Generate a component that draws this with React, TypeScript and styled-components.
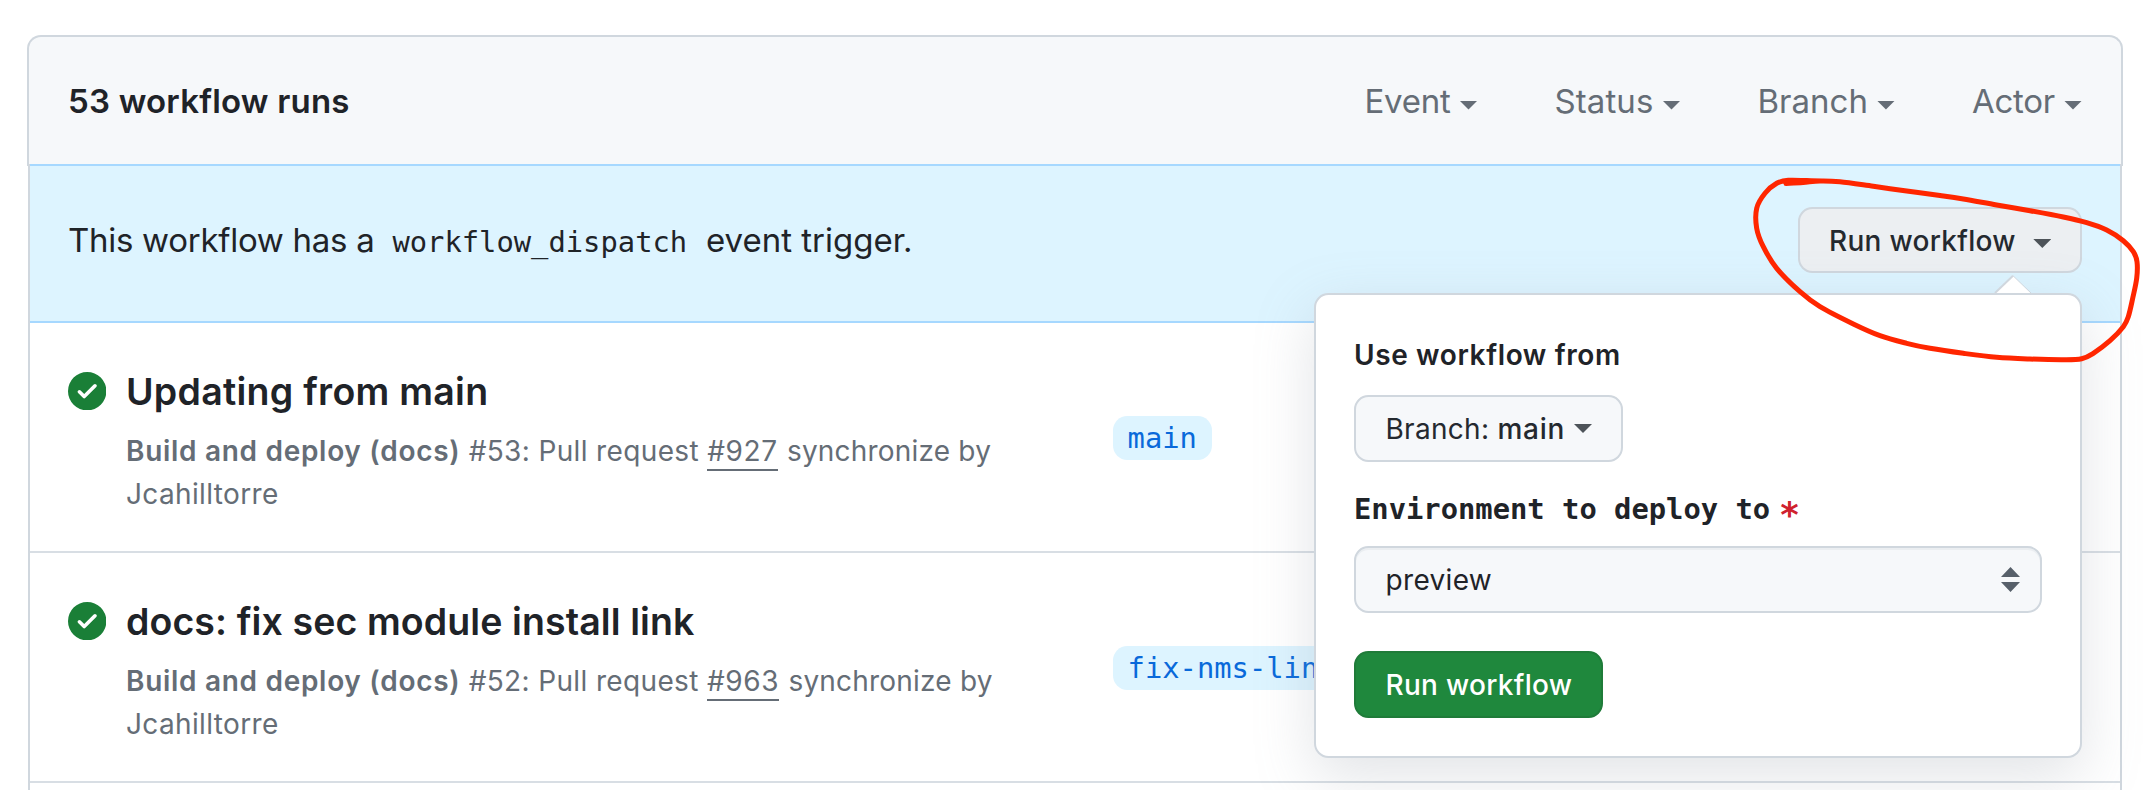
import React from "react";
import styled, { createGlobalStyle } from "styled-components";

const sans = `Inter, "Liberation Sans", sans-serif`;
const mono = `"DejaVu Sans Mono", "Liberation Mono", monospace`;

const GlobalStyle = createGlobalStyle`
  *, *::before, *::after { box-sizing: border-box; }
  body {
    margin: 0;
    background: #fff;
    color: #1f2328;
    font-family: ${sans};
    overflow: hidden;
  }
`;

const Page = styled.main`
  position: relative;
  width: 2144px;
  height: 790px;
  padding: 35px 21px 0 27px;
  overflow: hidden;
`;

const Header = styled.header`
  display: flex;
  align-items: center;
  justify-content: space-between;
  height: 131px;
  padding: 0 39px 2px 39px;
  background: #f6f8fa;
  border: 2px solid #d0d7de;
  border-bottom: 0;
  border-radius: 14px 14px 0 0;
`;

const RunCount = styled.h2`
  margin: 0;
  font-size: 33px;
  font-weight: 600;
  line-height: 50px;
  letter-spacing: 0.2px;
`;

const Filters = styled.nav`
  display: flex;
  gap: 77px;
`;

const Filter = styled.button<{ $tracking: number }>`
  display: flex;
  align-items: center;
  gap: 9px;
  padding: 0;
  border: 0;
  background: none;
  color: #656d76;
  font: 400 33px/50px ${sans};
  letter-spacing: ${(p) => p.$tracking}px;
`;

const Caret = styled.span<{ $drop?: number }>`
  flex: none;
  width: 18px;
  height: 9px;
  margin-top: ${(p) => p.$drop ?? 0}px;
  background: currentColor;
  clip-path: polygon(0 0, 100% 0, 50% 100%);
`;

const RunList = styled.section`
  height: 700px;
  margin: -2px 1px 0;
  border: solid #d0d7de;
  border-width: 0 2px;
`;

const Banner = styled.div`
  position: relative;
  display: flex;
  align-items: flex-start;
  justify-content: space-between;
  height: 159px;
  padding: 41px 38px 0;
  background: #ddf4ff;
  border: solid #a6d8ff;
  border-width: 2px 0;
`;

const BannerText = styled.p`
  margin: 0;
  font-size: 33px;
  line-height: 66px;
  letter-spacing: -0.28px;
`;

const BannerTail = styled.span`
  letter-spacing: 0;
`;

const Code = styled.code`
  padding: 0 9.5px 0 9px;
  font: 28.8px ${mono};
  letter-spacing: 0;
`;

const Button = styled.button<{ $variant?: "active" | "primary" }>`
  display: inline-flex;
  flex: none;
  align-items: center;
  height: 67px;
  padding: 0 28px 0 29.5px;
  border: 2px solid ${(p) => (p.$variant === "primary" ? "#1f7b39" : "#d0d7de")};
  border-radius: 14.4px;
  background: ${(p) =>
    p.$variant === "primary" ? "#1f883d" : p.$variant === "active" ? "#eceff2" : "#f6f8fa"};
  color: ${(p) => (p.$variant === "primary" ? "#fff" : "#24292f")};
  font: 500 28px/40px ${sans};
  letter-spacing: 0.3px;
  white-space: pre;
`;

const TriggerButton = styled(Button)`
  width: 284px;
  height: 66px;
  padding: 2px 28px 0 29px;
  gap: 17.5px;
`;

const BranchButton = styled(Button)`
  align-self: flex-start;
  width: 269px;
  margin-top: 18px;
`;

const SubmitButton = styled(Button)`
  align-self: flex-start;
  width: 249px;
  margin-top: 38px;
`;

const BranchPrefix = styled.span`
  font-weight: 400;
  letter-spacing: 0.3px;
`;

const BranchName = styled.span`
  margin-right: 9px;
  letter-spacing: 0.7px;
`;

const ButtonCaret = styled(Caret)`
  background: #4d5359;
`;

const Popover = styled.form`
  position: absolute;
  top: 127px;
  right: 38px;
  z-index: 2;
  display: flex;
  flex-direction: column;
  width: 768px;
  height: 465px;
  padding: 39px 38px 38px;
  background: #fff;
  border: 2px solid #d0d7de;
  border-radius: 14.4px;
  box-shadow: 0 19px 58px rgba(140, 149, 159, 0.25);
`;

const PopoverArrow = styled.svg`
  position: absolute;
  top: -20px;
  right: 48px;
  width: 38px;
  height: 18px;
`;

const FieldTitle = styled.span`
  font-size: 28px;
  font-weight: 600;
  line-height: 43px;
  letter-spacing: 0.62px;
`;

const InputLabel = styled.label`
  display: flex;
  align-items: flex-start;
  height: 36px;
  margin-top: 29px;
  font: 700 28.8px/37px ${mono};
`;

const Required = styled.span`
  margin: 6px 0 0 9px;
  color: #cf222e;
  font-size: 35px;
  font-weight: 700;
`;

const Select = styled.div`
  display: flex;
  flex: none;
  align-items: center;
  justify-content: space-between;
  height: 67px;
  margin-top: 19px;
  padding: 0 20px 0 29.5px;
  background: #f6f8fa;
  border: 2px solid #d0d7de;
  border-radius: 14.4px;
  box-shadow: inset 0 2px 0 rgba(208, 215, 222, 0.3);
  font-size: 28px;
  line-height: 40px;
  letter-spacing: 0.33px;
`;

const Row = styled.article`
  display: flex;
  height: 230px;
  padding: 40px 38px 0;
  border-bottom: 2px solid #d8dee4;
`;

const StatusIcon = styled.svg`
  width: 38.4px;
  height: 38.4px;
  margin: 9px 19.6px 0 0;
  fill: #1a7f37;
`;

const RunInfo = styled.div`
  width: 987px;
  padding-right: 40px;
`;

const RunTitle = styled.h3<{ $tracking: number }>`
  margin: 0 0 9px;
  font-size: 37.5px;
  font-weight: 600;
  line-height: 58px;
  letter-spacing: ${(p) => p.$tracking}px;
`;

const RunMeta = styled.p`
  margin: 0;
  color: #656d76;
  font-size: 28px;
  line-height: 43px;
  letter-spacing: 0.36px;
`;

const WorkflowName = styled.strong`
  font-weight: 600;
  letter-spacing: 0.7px;
`;

const PullLink = styled.a`
  padding-bottom: 1px;
  border-bottom: 2px solid #656d76;
  letter-spacing: 0.6px;
`;

const Trigger = styled.span`
  margin-left: 1px;
  letter-spacing: 0.2px;
`;

const Actor = styled.span`
  display: block;
`;

const BranchTag = styled.span`
  height: 44px;
  margin-top: 53px;
  padding: 0 14.6px;
  border-radius: 14.4px;
  background: #ddf4ff;
  color: #0969da;
  font: 28.8px/44px ${mono};
  white-space: nowrap;
`;

const Annotation = styled.svg`
  position: absolute;
  top: 165px;
  left: 1740px;
  z-index: 3;
  width: 404px;
  height: 210px;
  fill: none;
  stroke: #ff2600;
  stroke-width: 5;
  stroke-linecap: round;
  stroke-linejoin: round;
  pointer-events: none;
`;

const filters = [
  { label: "Event", tracking: -0.24 },
  { label: "Status", tracking: 0.1 },
  { label: "Branch", tracking: 0 },
  { label: "Actor", tracking: -0.25 },
];

const runs = [
  { title: "Updating from main", tracking: 0.27, number: 53, pull: 927, branch: "main" },
  { title: "docs: fix sec module install link", tracking: 0.1, number: 52, pull: 963, branch: "fix-nms-links" },
];

const loop: [number, number][] = [
  [1786, 183.5], [1803, 182.5], [1820, 181], [1840, 181.8], [1873.3, 186.3], [1906.7, 191], [1940, 195.5],
  [1963.3, 199], [1996.7, 205], [2030, 210.7], [2063.3, 217], [2086.7, 222.7], [2106.7, 230],
  [2123.3, 240.7], [2133.3, 251.7], [2137, 261.7], [2136.7, 278.3], [2132.7, 298.3],
  [2128.3, 316.7], [2123.3, 326.7], [2110, 340.7], [2093.3, 353.3], [2081.7, 358.7],
  [2063.3, 359.7], [2030, 359], [1996.7, 357.3], [1963.3, 353.3], [1930, 348.3],
  [1906.7, 343.3], [1880, 335.7], [1853.3, 324], [1820, 306.7], [1800, 291.7],
  [1776.7, 268.3], [1763.3, 246.7], [1756.7, 228.3], [1756.7, 208.3], [1765, 193.3],
  [1776.7, 183.3], [1788.3, 180.3], [1806.7, 180.6], [1822, 181],
];

// Joins the points with Catmull-Rom segments written as cubic curves.
function smoothPath(points: [number, number][]) {
  const at = (i: number) => points[Math.max(0, Math.min(points.length - 1, i))];
  return points.slice(1).reduce((d, [x, y], i) => {
    const [p0, p1, p3] = [at(i - 1), at(i), at(i + 2)];
    const c1 = [p1[0] + (x - p0[0]) / 6, p1[1] + (y - p0[1]) / 6];
    const c2 = [x - (p3[0] - p1[0]) / 6, y - (p3[1] - p1[1]) / 6];
    return `${d} C${c1} ${c2} ${x},${y}`;
  }, `M${points[0]}`);
}

export default function App() {
  return (
    <Page>
      <GlobalStyle />
      <Header>
        <RunCount>53 workflow runs</RunCount>
        <Filters>
          {filters.map((f) => (
            <Filter key={f.label} $tracking={f.tracking}>
              {f.label}
              <Caret $drop={9} />
            </Filter>
          ))}
        </Filters>
      </Header>
      <RunList>
        <Banner>
          <BannerText>
            This workflow has a <Code>workflow_dispatch</Code>
            <BannerTail> event trigger.</BannerTail>
          </BannerText>
          <TriggerButton $variant="active">
            Run workflow
            <ButtonCaret $drop={5} />
          </TriggerButton>
          <Popover>
            <PopoverArrow viewBox="0 0 38 18">
              <path d="M1.5 18 19 0.5 36.5 18Z" fill="#fff" />
              <path d="M1 18 19 0.7" fill="none" stroke="#d0d7de" strokeWidth="2" />
              <path d="M19 0.7 37 18" fill="none" stroke="#d0d7de" strokeWidth="1" />
            </PopoverArrow>
            <FieldTitle>Use workflow from</FieldTitle>
            <BranchButton type="button">
              <BranchPrefix>Branch: </BranchPrefix>
              <BranchName>main</BranchName>
              <ButtonCaret />
            </BranchButton>
            <InputLabel>
              Environment to deploy to<Required>*</Required>
            </InputLabel>
            <Select>
              preview
              <svg width="19" height="25" viewBox="0 0 19 25" fill="#57606a">
                <path d="M0 10 9.5 0 19 10ZM0 15 9.5 25 19 15Z" />
              </svg>
            </Select>
            <SubmitButton $variant="primary" type="button">
              Run workflow
            </SubmitButton>
          </Popover>
        </Banner>
        {runs.map((run) => (
          <Row key={run.number}>
            <StatusIcon viewBox="0 0 16 16">
              <path d="M8 16A8 8 0 1 1 8 0a8 8 0 0 1 0 16Zm3.78-9.72a.751.751 0 0 0-.018-1.042.751.751 0 0 0-1.042-.018L6.75 9.19 5.28 7.72a.751.751 0 0 0-1.042.018.751.751 0 0 0-.018 1.042l2 2a.75.75 0 0 0 1.06 0Z" />
            </StatusIcon>
            <RunInfo>
              <RunTitle $tracking={run.tracking}>{run.title}</RunTitle>
              <RunMeta>
                <WorkflowName>Build and deploy (docs)</WorkflowName>
                {` #${run.number}: Pull request `}
                <PullLink>#{run.pull}</PullLink> <Trigger>synchronize by</Trigger>
                <Actor>Jcahilltorre</Actor>
              </RunMeta>
            </RunInfo>
            <BranchTag>{run.branch}</BranchTag>
          </Row>
        ))}
      </RunList>
      <Annotation viewBox="1740 165 404 210">
        <path d={smoothPath(loop)} />
      </Annotation>
    </Page>
  );
}
